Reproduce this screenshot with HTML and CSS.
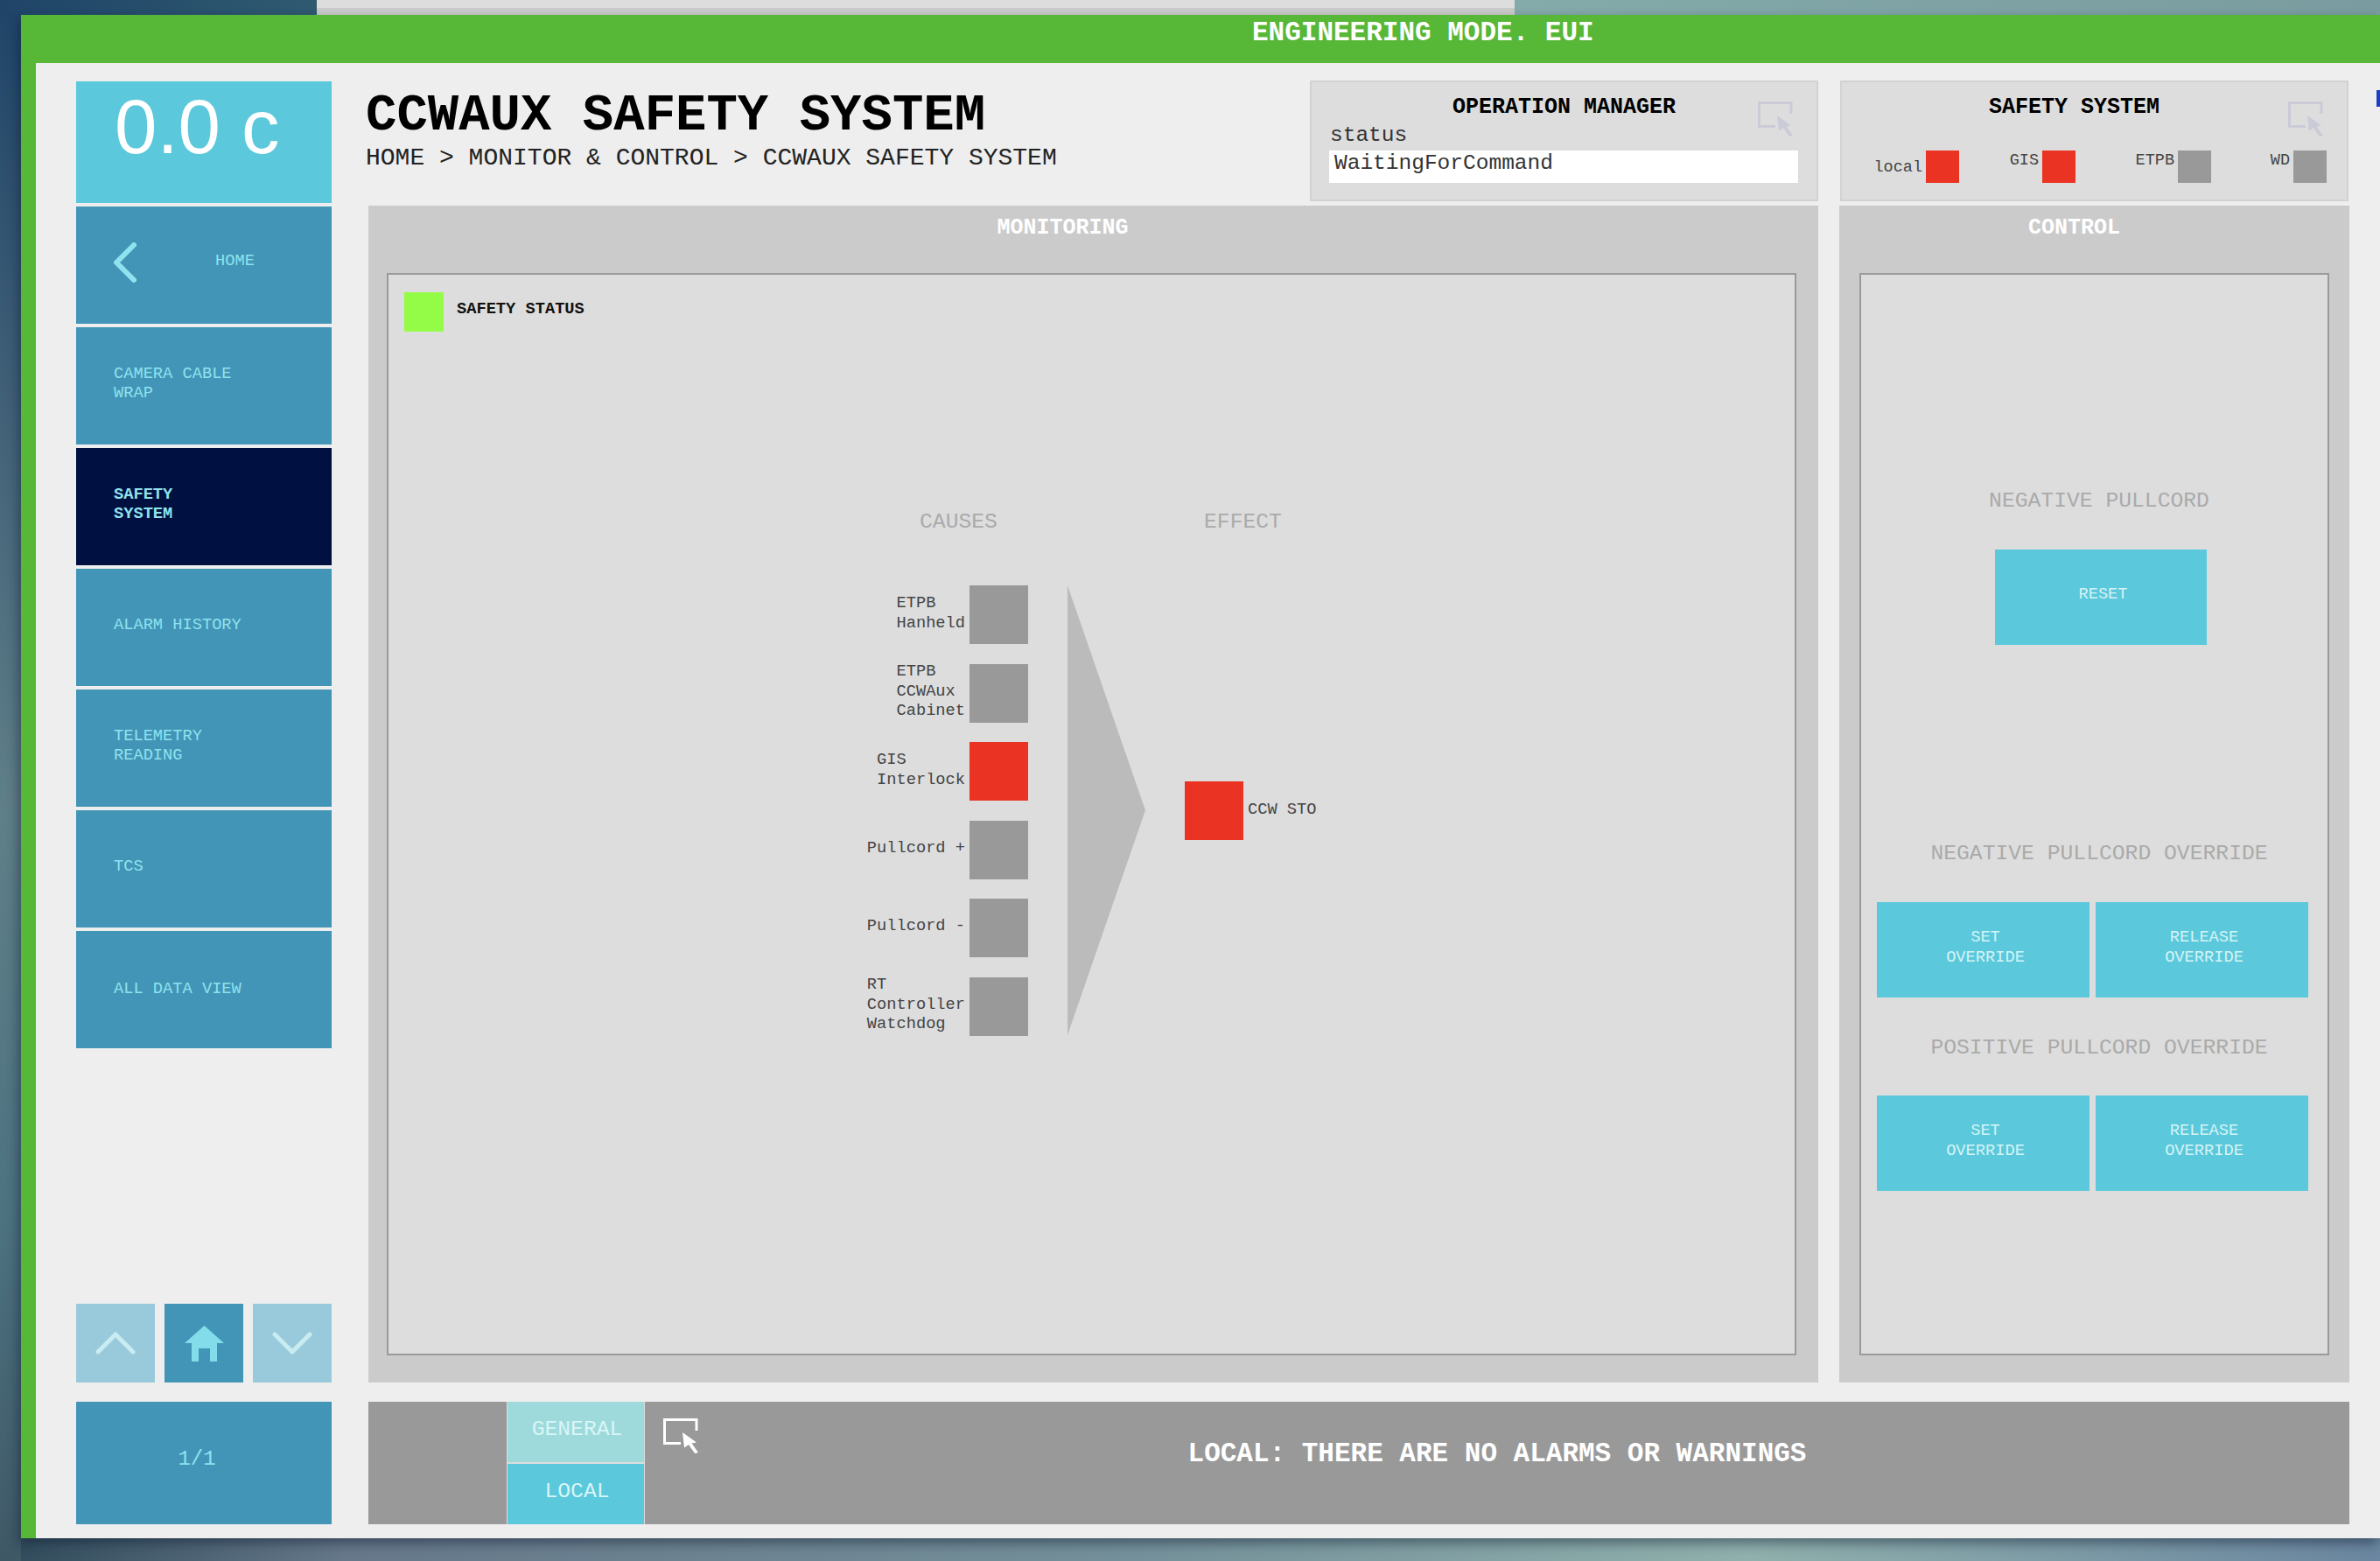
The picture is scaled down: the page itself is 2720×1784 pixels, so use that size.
FILE: index.html
```html
<!DOCTYPE html>
<html lang="en">
<head>
    <meta charset="UTF-8">
    <meta name="viewport" content="width=device-width, initial-scale=1.0">
    <link rel="stylesheet" href="styles.css">
    <title>CCWAUX Safety System</title>
</head>
<body>
    <svg class="defs" width="0" height="0">
        <symbol id="pick-icon" viewBox="0 0 46 40">
            <path d="M20 28.500H1.500V1.500H38V14" fill="none" stroke="currentColor" stroke-width="3"/>
            <path d="M22 16L38 27.500L32.500 28.500L40 39L36 40L29 30L24 33.500Z" fill="currentColor"/>
        </symbol>
    </svg>

    <div class="back-window"></div>
    <div class="edge-mark"></div>

    <div class="window">
        <div class="title-bar">ENGINEERING MODE. EUI</div>

        <div class="window-body">
            <div class="sidebar">
                <div class="temp">0.0 c</div>
                <div class="nav-item nav-home">
                    <svg class="chevron-left" width="26" height="46" viewBox="0 0 26 46">
                        <path d="M23 3L3 23L23 43" fill="none" stroke="#8fe2ee" stroke-width="6" stroke-linecap="round" stroke-linejoin="round"/>
                    </svg>
                    <span>HOME</span>
                </div>
                <div class="nav-item">CAMERA CABLE<br>WRAP</div>
                <div class="nav-item active">SAFETY<br>SYSTEM</div>
                <div class="nav-item">ALARM HISTORY</div>
                <div class="nav-item">TELEMETRY<br>READING</div>
                <div class="nav-item">TCS</div>
                <div class="nav-item nav-last">ALL DATA VIEW</div>

                <div class="pager">
                    <div class="pager-btn faded">
                        <svg width="46" height="26" viewBox="0 0 46 26"><path d="M3 23L23 3L43 23" fill="none" stroke="#c8ecef" stroke-width="5" stroke-linecap="round" stroke-linejoin="round"/></svg>
                    </div>
                    <div class="pager-btn">
                        <svg width="45" height="41" viewBox="0 0 45 41"><path d="M22.500 0L45 20H37V41H29V26H16V41H8V20H0Z" fill="#82dcea"/></svg>
                    </div>
                    <div class="pager-btn faded">
                        <svg width="46" height="26" viewBox="0 0 46 26"><path d="M3 3L23 23L43 3" fill="none" stroke="#c8ecef" stroke-width="5" stroke-linecap="round" stroke-linejoin="round"/></svg>
                    </div>
                </div>
                <div class="page-count">1/1</div>
            </div>

            <div class="main">
                <div class="head">
                    <div class="head-title">
                        <h1>CCWAUX SAFETY SYSTEM</h1>
                        <div class="crumbs">HOME &gt; MONITOR &amp; CONTROL &gt; CCWAUX SAFETY SYSTEM</div>
                    </div>

                    <div class="head-panel">
                        <div class="head-panel-title">OPERATION MANAGER</div>
                        <svg class="pick head-pick"><use href="#pick-icon"/></svg>
                        <div class="status-label">status</div>
                        <div class="status-value">WaitingForCommand</div>
                    </div>

                    <div class="head-panel">
                        <div class="head-panel-title safety-title">SAFETY SYSTEM</div>
                        <svg class="pick head-pick"><use href="#pick-icon"/></svg>
                        <div class="indicators">
                            <div class="indicator"><span class="low">local</span><i class="led red"></i></div>
                            <div class="indicator"><span>GIS</span><i class="led red"></i></div>
                            <div class="indicator"><span>ETPB</span><i class="led"></i></div>
                            <div class="indicator"><span>WD</span><i class="led"></i></div>
                        </div>
                    </div>
                </div>

                <div class="panels">
                    <div class="panel">
                        <div class="panel-title">MONITORING</div>
                        <div class="panel-inner">
                            <div class="safety-status">
                                <i class="status-led"></i>
                                <span>SAFETY STATUS</span>
                            </div>

                            <div class="diagram">
                                <div class="causes">
                                    <div class="diagram-title causes-title">CAUSES</div>
                                    <div class="cause"><span>ETPB<br>Hanheld</span><i class="square"></i></div>
                                    <div class="cause"><span>ETPB<br>CCWAux<br>Cabinet</span><i class="square"></i></div>
                                    <div class="cause"><span>GIS<br>Interlock</span><i class="square red"></i></div>
                                    <div class="cause"><span>Pullcord +</span><i class="square"></i></div>
                                    <div class="cause"><span>Pullcord -</span><i class="square"></i></div>
                                    <div class="cause"><span>RT<br>Controller<br>Watchdog</span><i class="square"></i></div>
                                </div>
                                <div class="arrow"></div>
                                <div class="effects">
                                    <div class="diagram-title effect-title">EFFECT</div>
                                    <div class="effect"><i class="square red"></i><span>CCW STO</span></div>
                                </div>
                            </div>
                        </div>
                    </div>

                    <div class="panel panel-control">
                        <div class="panel-title">CONTROL</div>
                        <div class="panel-inner control-inner">
                            <div class="control-title first">NEGATIVE PULLCORD</div>
                            <div class="btn btn-reset">RESET</div>
                            <div class="control-title second">NEGATIVE PULLCORD OVERRIDE</div>
                            <div class="btn-row">
                                <div class="btn">SET<br>OVERRIDE</div>
                                <div class="btn">RELEASE<br>OVERRIDE</div>
                            </div>
                            <div class="control-title third">POSITIVE PULLCORD OVERRIDE</div>
                            <div class="btn-row">
                                <div class="btn">SET<br>OVERRIDE</div>
                                <div class="btn">RELEASE<br>OVERRIDE</div>
                            </div>
                        </div>
                    </div>
                </div>

                <div class="alarm-bar">
                    <div class="alarm-blank"></div>
                    <div class="alarm-tabs">
                        <div class="alarm-tab general">GENERAL</div>
                        <div class="alarm-tab">LOCAL</div>
                    </div>
                    <div class="alarm-message">
                        <svg class="pick alarm-pick"><use href="#pick-icon"/></svg>
                        LOCAL: THERE ARE NO ALARMS OR WARNINGS
                    </div>
                </div>
            </div>
        </div>
    </div>
</body>
</html>
```
FILE: styles.css
```css
* {
    box-sizing: border-box;
}

body {
    margin: 0;
    height: 100vh;
    overflow: hidden;
    position: relative;
    font-family: "Liberation Mono", monospace;
    background-color: #5f7d88;
    background-repeat: no-repeat;
    background-image:
        linear-gradient(90deg, #1f4468 0, #2f5a70 362px, #84aaa9 1731px, #7a9ca0 100%),
        linear-gradient(180deg, #1f4468 0, #46657a 30%, #5f7f88 52%, #4c7280 78%, #3f5866 100%),
        linear-gradient(90deg, #2f4a5a 0, #66788a 400px, #74909a 1300px, #8fb0ac 2000px, #6a86a0 100%);
    background-size: 100% 18px, 24px 100%, 100% 30px;
    background-position: 0 0, 0 0, 0 100%;
}

.defs {
    position: absolute;
}

/* desktop bits that show round the app window */
.back-window {
    position: absolute;
    left: 362px;
    top: 0;
    width: 1369px;
    height: 17px;
    background-color: #dddddd;
    border-bottom: 8px solid #cacaca;
}

.edge-mark {
    position: absolute;
    right: 0;
    top: 103px;
    width: 4px;
    height: 19px;
    background-color: #1a3fc4;
    z-index: 2;
}

.window {
    position: absolute;
    left: 24px;
    top: 17px;
    right: 0;
    bottom: 26px;
    display: flex;
    flex-direction: column;
    background-color: #57b737;
    box-shadow: -3px 6px 12px rgba(10, 25, 45, 0.45);
}

.title-bar {
    height: 55px;
    flex: none;
    padding-left: 1407px;
    line-height: 42px;
    font-size: 31px;
    font-weight: bold;
    color: #ffffff;
}

.window-body {
    flex: 1;
    min-height: 0;
    margin-left: 17px;
    padding: 20px 35px 16px 46px;
    display: flex;
    gap: 42px;
    background-color: #eeeeee;
}

/* left column */
.sidebar {
    width: 292px;
    flex: none;
    display: flex;
    flex-direction: column;
    gap: 4px;
    padding-top: 1px;
}

.temp {
    height: 139px;
    padding: 0 0 0 44px;
    background-color: #5bc8db;
    color: #ffffff;
    font-family: "Liberation Sans", sans-serif;
    font-size: 87px;
    line-height: 104px;
    white-space: nowrap;
}

.nav-item {
    height: 134px;
    padding: 0 0 7px 43px;
    display: flex;
    flex-wrap: wrap;
    align-content: center;
    background-color: #4295b7;
    color: #8fe2ee;
    font-size: 18.7px;
    line-height: 22px;
}

.nav-home {
    flex-wrap: nowrap;
    align-items: center;
}

.nav-home span {
    margin-left: 90px;
    margin-bottom: 4px;
}

.nav-last {
    padding-bottom: 3px;
}

.nav-item.active {
    background-color: #001040;
    font-weight: bold;
}

.pager {
    margin-top: auto;
    display: flex;
    gap: 11px;
}

.pager-btn {
    flex: 1;
    height: 90px;
    display: flex;
    align-items: center;
    justify-content: center;
    background-color: #4295b7;
}

.pager-btn.faded {
    background-color: #99cadc;
}

.page-count {
    height: 140px;
    margin-top: 18px;
    padding: 0 16px 9px 0;
    display: flex;
    align-items: center;
    justify-content: center;
    background-color: #4295b7;
    color: #8fe2ee;
    font-size: 24px;
}

/* right part */
.main {
    flex: 1;
    min-width: 0;
    display: flex;
    flex-direction: column;
}

.head {
    height: 138px;
    flex: none;
    display: flex;
    gap: 25px;
    padding-right: 1px;
}

.head-title {
    flex: 1;
    margin-left: -3px;
    padding-top: 10px;
}

h1 {
    margin: 0;
    font-size: 59px;
    line-height: 62px;
    font-weight: bold;
    color: #000000;
}

.crumbs {
    margin-top: 0;
    font-size: 28px;
    line-height: 34px;
    color: #222222;
}

.head-panel {
    position: relative;
    width: 581px;
    padding-top: 14px;
    background-color: #dddddd;
    border: 2px solid #d2d2d2;
}

.head-panel-title {
    font-size: 25px;
    font-weight: bold;
    line-height: 30px;
    text-align: center;
    color: #000000;
}

.safety-title {
    padding-right: 46px;
}

.pick {
    width: 46px;
    height: 40px;
}

.head-pick {
    position: absolute;
    top: 22px;
    right: 21px;
    color: #cbcbd8;
}

.status-label {
    margin: 3px 0 0 21px;
    font-size: 24.5px;
    line-height: 28px;
    color: #333333;
}

.status-value {
    height: 37px;
    margin: 3px 21px 0 20px;
    padding: 1px 0 0 6px;
    background-color: #ffffff;
    font-size: 24.5px;
    line-height: 28px;
    color: #333333;
}

.indicators {
    display: grid;
    grid-template-columns: 134px 133px 155px 132px;
    margin-top: 34px;
}

.indicator {
    display: flex;
    justify-content: flex-end;
    gap: 4px;
    font-size: 18.5px;
    line-height: 24px;
    color: #444444;
}

.indicator .low {
    margin-top: 8px;
}

.led {
    width: 38px;
    height: 37px;
    background-color: #999999;
}

.led.red {
    background-color: #ea3323;
}

.panels {
    flex: 1;
    min-height: 0;
    margin-top: 5px;
    display: grid;
    grid-template-columns: 1657px 583px;
    gap: 24px;
}

.panel {
    display: flex;
    flex-direction: column;
    padding: 0 25px 31px 21px;
    background-color: #cbcbcb;
}

.panel-control {
    padding: 0 23px 31px 23px;
}

.panel-title {
    height: 77px;
    flex: none;
    padding: 11px 66px 0 0;
    font-size: 25px;
    font-weight: bold;
    line-height: 30px;
    text-align: center;
    color: #ffffff;
}

.panel-control .panel-title {
    padding-right: 46px;
}

.panel-inner {
    flex: 1;
    background-color: #dddddd;
    border: 2px solid #9a9a9a;
}

.safety-status {
    display: flex;
    padding: 20px 0 0 18px;
    font-size: 18.7px;
    font-weight: bold;
    line-height: 38px;
    color: #111111;
}

.status-led {
    width: 45px;
    height: 45px;
    margin-right: 15px;
    background-color: #94fc47;
}

.diagram {
    display: flex;
    margin: 200px 0 0 531px;
}

.diagram-title {
    height: 90px;
    padding-top: 2px;
    font-size: 24.7px;
    line-height: 30px;
    color: #aaaaaa;
}

.causes-title {
    padding-left: 76px;
}

.effect-title {
    padding-left: 22px;
}

.causes {
    width: 200px;
    display: flex;
    flex-direction: column;
    gap: 22.500px;
}

.causes .diagram-title {
    margin-bottom: -22.500px;
}

.cause {
    height: 67px;
    display: flex;
    justify-content: flex-end;
    align-items: center;
    gap: 5px;
    font-size: 18.7px;
    line-height: 22.500px;
    color: #444444;
}

.cause span {
    padding-bottom: 4px;
}

.square {
    width: 67px;
    height: 67px;
    flex: none;
    background-color: #999999;
}

.square.red {
    background-color: #ea3323;
}

.arrow {
    width: 89px;
    height: 514px;
    margin: 90px 45px 0;
    background-color: #bbbbbb;
    clip-path: polygon(0 0, 100% 50%, 0 100%);
}

.effect {
    margin-top: 224px;
    display: flex;
    align-items: center;
    gap: 5px;
    font-size: 18.7px;
    color: #444444;
}

.effect span {
    padding-bottom: 4px;
}

.control-inner {
    padding: 0 22px 0 18px;
    display: flex;
    flex-direction: column;
}

.control-title {
    padding-left: 15px;
    font-size: 24.7px;
    line-height: 30px;
    text-align: center;
    color: #aaaaaa;
}

.control-title.first {
    margin: 243px 0 41px;
}

.control-title.second {
    margin: 223px 0 41px;
}

.control-title.third {
    margin: 42px 0 40px;
}

.btn {
    height: 109px;
    flex: 1;
    padding: 0 0 6px 5px;
    display: flex;
    align-items: center;
    justify-content: center;
    text-align: center;
    background-color: #5bc8db;
    color: #d4f4f6;
    font-size: 18.7px;
    line-height: 22.500px;
}

.btn-reset {
    flex: none;
    width: 242px;
    margin-left: 135px;
    padding-bottom: 7px;
}

.btn-row {
    display: flex;
    gap: 7px;
}

/* bottom bar */
.alarm-bar {
    height: 140px;
    flex: none;
    margin-top: 22px;
    display: flex;
    background-color: #999999;
}

.alarm-blank {
    width: 158px;
}

.alarm-tabs {
    width: 158px;
    padding: 0 1px;
    display: flex;
    flex-direction: column;
    gap: 2px;
    background-color: #dddddd;
}

.alarm-tab {
    flex: 1;
    padding: 0 0 8px 3px;
    display: flex;
    align-items: center;
    justify-content: center;
    background-color: #5bc8db;
    color: #d8f6f8;
    font-size: 24.7px;
}

.alarm-tab.general {
    background-color: #9edadb;
}

.alarm-message {
    flex: 1;
    position: relative;
    display: flex;
    align-items: center;
    justify-content: center;
    padding-bottom: 22px;
    font-size: 31px;
    font-weight: bold;
    color: #ffffff;
}

.alarm-pick {
    position: absolute;
    left: 21px;
    top: 19px;
    color: #ffffff;
}
```
